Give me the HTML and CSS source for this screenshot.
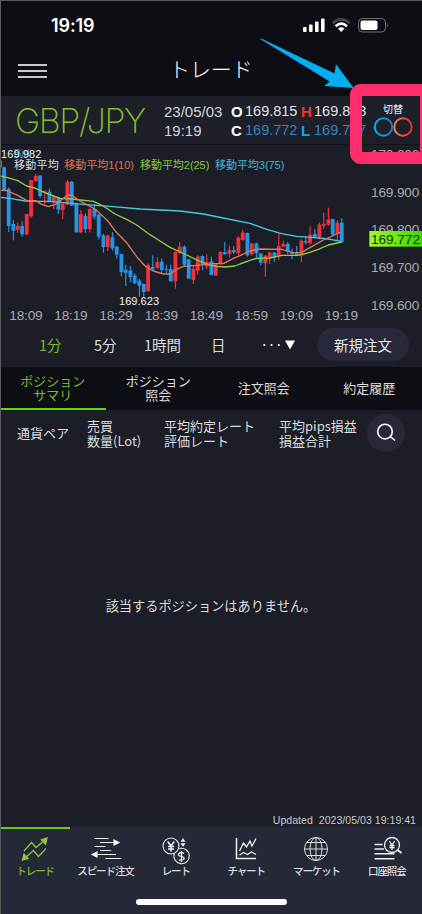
FILE: index.html
```html
<!DOCTYPE html>
<html lang="ja">
<head>
<meta charset="utf-8">
<title>トレード</title>
<link rel="stylesheet" href="styles.css">
</head>
<body>
<div class="app">
  <div class="status">
    <span class="clock">19:19</span>
    <svg class="status-icons" width="90" height="18" viewBox="0 0 90 18">
      <g fill="#fff"><rect x="1" y="11" width="3.6" height="5" rx="1"/><rect x="7" y="8.5" width="3.6" height="7.5" rx="1"/><rect x="13" y="5.5" width="3.6" height="10.5" rx="1"/><rect x="19" y="2.5" width="3.6" height="13.5" rx="1"/></g>
      <g fill="none" stroke-width="2.6"><path d="M30.5 7.2Q39.200 -.5 48 7.200" stroke="#42444c"/><path d="M33.600 10.200Q39.200 5.200 45 10.200" stroke="#fff"/></g>
      <path d="M36 12.500Q39.200 9.800 42.500 12.500L39.200 16Z" fill="#fff"/>
      <rect x="56.500" y="2.500" width="27" height="13.500" rx="4" fill="none" stroke="#6d6f77"/>
      <rect x="58.500" y="4.500" width="17" height="9.500" rx="2" fill="#fff"/>
      <path d="M85 7.300q2 1.900 0 4z" fill="#6d6f77"/>
    </svg>
  </div>
  <header class="nav">
    <div class="menu"><i></i><i></i><i></i></div>
    <h1>トレード</h1>
  </header>
  <section class="quote">
    <div class="pair">GBP/JPY</div>
    <div class="stamp"><span>23/05/03</span><span>19:19</span></div>
    <div class="ohlc">
      <b>O</b><span>169.815</span><b class="high">H</b><span>169.828</span>
      <b>C</b><span class="blue">169.772</span><b class="low">L</b><span class="blue">169.767</span>
    </div>
    <div class="switch">
      <span>切替</span>
      <svg width="40" height="20" viewBox="0 0 40 20">
        <defs>
          <linearGradient id="cb"><stop offset="0" stop-color="#00b4f5"/><stop offset="1" stop-color="#2878c8"/></linearGradient>
          <linearGradient id="cr"><stop offset="0" stop-color="#e8835a"/><stop offset="1" stop-color="#f0282e"/></linearGradient>
        </defs>
        <circle cx="10.500" cy="10" r="8.700" fill="none" stroke="url(#cb)" stroke-width="2"/>
        <circle cx="30" cy="10" r="8.700" fill="none" stroke="url(#cr)" stroke-width="2"/>
      </svg>
    </div>
  </section>
  <svg class="chart" width="422" height="178" viewBox="0 15 1266 534">
    <defs><linearGradient id="now"><stop offset="0" stop-color="#a0fa28"/><stop offset="1" stop-color="#38d800"/></linearGradient></defs>
    <text class="bid" x="42" y="50" textLength="48">Bid</text>
    <text class="mark" x="3" y="54" textLength="121">169.982</text>
    <g class="legend">
      <text x="42" y="88" fill="#d8d8da" textLength="134">移動平均</text>
      <text x="193" y="88" fill="#e0704c" textLength="209">移動平均1(10)</text>
      <text x="420" y="88" fill="#8cc63f" textLength="208">移動平均2(25)</text>
      <text x="645" y="88" fill="#42b4dc" textLength="208">移動平均3(75)</text>
    </g>
    <g id="candles"></g>
    <g class="averages">
      <path stroke="#4cc8e0" d="M0 172L30 175L75 183L160 185L250 193L330 199L420 207L540 213L610 222L670 234L750 250L800 268L845 281L890 289L935 292L985 297L1023 304"/>
      <path stroke="#8fd03c" d="M0 108L20 112L53 122L80 138L107 145L134 158L161 168L180 175L215 177L280 184L310 198L345 222L380 238L410 255L450 284L480 303L510 322L560 345L595 362L625 374L650 379L675 381L705 378L720 372L750 361L770 355L810 354L845 346L895 346L920 340L955 328L985 315L1025 306"/>
      <path stroke="#e07a58" d="M0 151L20 152L53 166L80 181L107 182L125 193L145 200L165 194L200 167L215 165L240 183L265 196L285 207L323 242L345 272L380 308L410 350L435 378L460 393L490 402L510 402L530 388L550 379L590 376L640 371L670 371L700 355L720 347L750 333L780 327L845 328L880 338L905 337L930 323L970 300L1023 276"/>
    </g>
    <text class="mark" x="357" y="494" textLength="120">169.623</text>
    <g class="axis">
      <text x="28" y="540" textLength="100">18:09</text><text x="163" y="540" textLength="100">18:19</text><text x="298" y="540" textLength="100">18:29</text><text x="434" y="540" textLength="100">18:39</text><text x="569" y="540" textLength="100">18:49</text><text x="704" y="540" textLength="100">18:59</text><text x="839" y="540" textLength="100">19:09</text><text x="974" y="540" textLength="100">19:19</text>
      <text x="1113" y="56" textLength="145">170.000</text><text x="1113" y="170" textLength="145">169.900</text><text x="1113" y="283" textLength="145">169.800</text><text x="1113" y="396" textLength="145">169.700</text><text x="1113" y="509" textLength="145">169.600</text>
    </g>
    <rect x="1108" y="273" width="158" height="47" fill="url(#now)"/>
    <text class="current" x="1113" y="312" textLength="147">169.772</text>
  </svg>
  <div class="periods">
    <span class="p1 green">1分</span><span class="p2">5分</span><span class="p3">1時間</span><span class="p4">日</span>
    <svg class="p5" width="34" height="12" viewBox="0 0 34 12" fill="#fff"><circle cx="2.300" cy="6" r="1.100"/><circle cx="9.500" cy="6" r="1.100"/><circle cx="16.800" cy="6" r="1.100"/><path d="M23 1.500h10l-5 9z"/></svg>
    <button>新規注文</button>
  </div>
  <div class="tabs">
    <div class="active">ポジション<br>サマリ</div><div>ポジション<br>照会</div><div class="single">注文照会</div><div class="single">約定履歴</div>
  </div>
  <div class="columns">
    <span>通貨ペア</span><span>売買<br>数量(Lot)</span><span>平均約定レート<br>評価レート</span><span>平均pips損益<br>損益合計</span>
    <div class="search"><svg width="20" height="20" viewBox="0 0 20 20" fill="none" stroke="#fff" stroke-width="1.600"><circle cx="9" cy="8.600" r="7.300"/><path d="M14.200 13.500L19 17.500"/></svg></div>
  </div>
  <main>
    <p class="empty">該当するポジションはありません。</p>
    <p class="updated"><span>Updated</span><span>2023/05/03 19:19:41</span></p>
  </main>
  <footer>
    <div class="item on">
      <svg width="30" height="30" viewBox="0 0 30 30" fill="none" stroke="#8cc63f" stroke-width="1.300"><path d="M4 16L11.500 7.500L16 12.500L25 5"/><path d="M27 3l-1.400 6.200-4.200-4.400z" fill="#8cc63f"/><path d="M26 13.500L18.500 21.500L13.500 15.500L5 23"/><path d="M2.500 25l1.500-6 4 4.400z" fill="#8cc63f"/></svg>
      <span>トレード</span></div>
    <div class="item">
      <svg width="30" height="30" viewBox="0 0 30 30" fill="none" stroke="#eee" stroke-width="1.200"><path d="M4.500 3.500h14M10 7.500h15M4.500 11.500h11M10 15.500h11M4 19.500h22M15.500 23.500h16"/><path d="M24 5l5 2.500-5 2.500zM7 17l-5 2.500L7 22z" fill="#fff"/></svg>
      <span>スピード注文</span></div>
    <div class="item">
      <svg width="30" height="30" viewBox="0 0 30 30" fill="none" stroke="#eee" stroke-width="1.100"><circle cx="10" cy="11" r="8"/><path d="M13.300 18.500A7.700 7.700 0 1 0 18.500 13.600"/><path stroke-width="1.600" d="M6.700 6.500L10 11l3.300-4.500M10 11v5.500M7 11.500h6M7 14h6"/><path stroke-width="1.300" d="M23 18.500q-3-2-5 0t2 3 3 2.500-5 1M20.500 16v11"/><path d="M20 6.500L22 3.500l2 3zM20 8.500L22 11.500l2-3z" fill="#fff" stroke-width=".5"/></svg>
      <span>レート</span></div>
    <div class="item">
      <svg width="30" height="30" viewBox="0 0 30 30" fill="none" stroke="#eee" stroke-width="1.300"><path stroke-width="1.500" d="M5.500 3v20.500H25"/><path d="M8.500 16L12.500 8l3 4 3.500-6 2 5L25 3.500M8.500 20l4-2.500 4 2 4-2.500 4.500 2.500"/></svg>
      <span>チャート</span></div>
    <div class="item">
      <svg width="30" height="30" viewBox="0 0 30 30" fill="none" stroke="#ddd" stroke-width="1"><circle cx="15" cy="14" r="11.500"/><ellipse cx="15" cy="14" rx="6" ry="11.500"/><path d="M15 2.500v23M3.500 14h23M6 7.500h18M6 20.500h18"/></svg>
      <span>マーケット</span></div>
    <div class="item">
      <svg width="30" height="30" viewBox="0 0 30 30" fill="none" stroke="#eee" stroke-width="1.300"><circle cx="20" cy="10" r="7.500"/><path stroke-width="2" d="M25.500 15L29.500 18"/><path d="M17.300 6l2.700 4 2.700-4M20 10v5M17.500 10.500h5M17.500 12.500h5"/><path stroke-width="1.600" d="M2.500 9.500h8M2.500 14h9.500M2.500 18.800h20M2.500 23.800h20"/></svg>
      <span>口座照会</span></div>
    <div class="home"></div>
  </footer>
  <svg class="arrow" width="100" height="56" viewBox="258 35 100 56"><path fill="#06aef0" d="M260.700 38.300L334.500 73.500L336 64.300L353.700 88L324.300 86L329.700 81.500L261 39.500Q260 38.700 260.700 38.300Z"/></svg>
  <div class="callout"></div>
  <div class="frame"></div>
</div>
<script src="chart.js"></script>
</body>
</html>
```
FILE: styles.css
```css
* { box-sizing: border-box; }
body { margin: 0; background: #1e202a; }
.app {
  position: relative; width: 422px; height: 914px; overflow: hidden;
  display: flex; flex-direction: column;
  background: #1c1e27; color: #dcdcde;
  font-family: "Liberation Sans", "Noto Sans CJK JP", sans-serif;
  font-weight: 400;
}
.status { height: 49px; background: #0d0e13; display: flex; justify-content: space-between; padding: 16px 31px 0 51px; flex: none; }
.clock { font: 600 18px/20px Inter, sans-serif; color: #fff; letter-spacing: -.1px; }
.status-icons { margin-right: -1px; }
.nav { height: 47px; background: #0d0e13; flex: none; display: flex; }
.menu { width: 29px; margin: 15px 0 0 18px; display: flex; flex-direction: column; gap: 4px; }
.menu i { height: 2px; background: #c9c9cb; }
.nav h1 { margin: 5px 0 0 122px; font-size: 21px; line-height: 32px; font-weight: 300; letter-spacing: -.1px; color: #fff; }
.quote { height: 49px; flex: none; display: flex; background: #1d1f29; border-bottom: 1px solid #11131a; }
.pair { width: 148px; padding-left: 15px; margin-right: 16px; font: 200 34px/49px Inter, sans-serif; color: #83c02f; letter-spacing: -1.4px; white-space: nowrap; }
.stamp { width: 67px; padding-top: 6px; display: flex; flex-direction: column; font-size: 15px; line-height: 19px; color: #d4d4d6; }
.ohlc { width: 138px; flex: none; display: grid; grid-template-columns: 14px 56px 13px 55px; grid-auto-rows: 19px; padding-top: 6px; font-size: 14.500px; line-height: 19px; color: #e3e3e5; }
.ohlc b { color: #fff; font-size: 15px; font-weight: 700; }
.ohlc .high { color: #f0343c; }
.ohlc .low { color: #16a8ec; }
.ohlc .blue { color: #2e86c6; }
.switch { width: 40px; flex: none; margin-left: 4px; display: flex; flex-direction: column; align-items: center; padding-top: 8px; }
.switch span { font-size: 10px; line-height: 12px; font-weight: 500; }
.switch svg { flex: none; margin-top: 1px; }
.chart { display: block; flex: none; }
.chart .bid { font-size: 34px; fill: #2388c8; }
.chart .mark { font-size: 33px; fill: #f2f2f2; }
.legend { font-size: 33px; }
.axis { font-size: 41px; fill: #a9aaae; }
.current { font-size: 41px; fill: #15300a; }
.averages { fill: none; stroke-width: 4; stroke-linejoin: round; }
.periods { height: 44px; flex: none; display: flex; align-items: center; padding-bottom: 1px; font: 400 14.500px/22px "Noto Sans CJK JP", sans-serif; }
.p1 { width: 55px; margin-left: 39px; }
.p2 { width: 50px; }
.p3 { width: 67px; }
.p4 { width: 51px; }
.p5 { margin-right: 21px; }
.green { color: #79b928; }
.periods button { width: 92px; height: 33px; border: 0; border-radius: 17px; padding: 0; background: #272938; color: #e6e6e8; font: inherit; }
.tabs { height: 43px; flex: none; display: grid; grid-template-columns: repeat(4, 1fr); background: #0d0e13; font-size: 13px; line-height: 13.500px; text-align: center; }
.tabs div { padding-top: 8px; }
.tabs .single { padding-top: 15px; }
.tabs .active { color: #79b928; border-bottom: 2px solid #5fd50b; }
.columns { height: 48px; flex: none; display: grid; grid-template-columns: 70px 77px 115px 88px 38px; padding: 0 0 2px 17px; align-items: center; font: 400 13px/15.500px "Noto Sans CJK JP", sans-serif; white-space: nowrap; }
.search { width: 38px; height: 38px; border-radius: 50%; background: #272938; display: flex; align-items: center; justify-content: center; }
main { flex: 1; display: flex; flex-direction: column; }
.empty { margin: 139px 0 0; text-align: center; font-size: 13.200px; line-height: 20px; }
.updated { margin: auto 6px 0 0; display: flex; justify-content: flex-end; gap: 6px; font-size: 10.600px; line-height: 14px; color: #c8c8cb; }
footer { height: 87px; flex: none; background: #252837; display: grid; grid-template-columns: repeat(6, 1fr); grid-template-rows: 70px 17px; position: relative; }
.item { display: flex; flex-direction: column; align-items: center; padding-top: 7px; font-size: 10.500px; font-weight: 500; line-height: 14px; letter-spacing: -1.100px; white-space: nowrap; border-top: 1px solid #252837; }
.item span { margin-top: -1px; }
.item svg { overflow: visible; }
.on { color: #79b928; border-top: 2px solid #6cc820; padding-top: 6px; }
.home { grid-column: 1 / -1; justify-self: center; width: 151px; height: 6px; margin-top: 2px; border-radius: 3px; background: #fff; }
.arrow { position: absolute; left: 258px; top: 35px; }
.callout { position: absolute; left: 350px; top: 84px; width: 82px; height: 80px; border: 12px solid #ff2d6b; border-radius: 11px; }
.frame { position: absolute; inset: 0; border: solid #5b5c60; border-width: 1px 0 0 1px; }
```
FILE: chart.js
```js
// x, direction (u: up, d: down), high, body top, body bottom, low
const candles = `0 d 62 62 82 82
12 d 80 82 150 150
26 d 142 147 258 276
40 d 240 252 272 301
53 u 248 258 270 279
66 d 244 258 283 290
80 u 222 222 283 286
93 u 120 120 229 234
107 u 102 108 123 126
120 d 105 107 168 174
134 u 150 154 157 196
148 d 146 155 185 185
161 u 170 171 187 207
175 d 170 172 209 222
188 u 190 191 210 237
202 u 121 125 194 196
215 d 123 125 197 197
229 d 190 190 277 277
242 u 210 222 277 279
256 d 220 228 267 279
269 u 205 207 267 278
283 d 192 207 230 238
296 d 222 224 290 298
310 d 281 286 321 338
323 u 284 287 321 333
337 d 276 292 325 331
350 d 318 320 344 356
364 d 342 342 396 409
377 d 374 389 399 438
391 d 378 391 411 427
404 d 400 407 429 432
418 d 416 422 437 470
431 d 430 432 456 470
444 u 370 375 453 455
458 d 346 381 388 390
472 u 352 366 384 386
485 d 356 365 390 402
499 d 375 386 389 402
512 d 374 387 424 424
526 u 334 336 424 446
539 u 306 320 338 342
553 d 316 320 374 381
566 d 358 358 416 416
580 u 376 386 420 432
593 u 346 350 392 404
607 d 346 348 372 391
620 u 343 366 380 388
634 d 350 364 405 405
647 u 373 373 407 407
661 u 334 336 372 374
674 d 306 336 343 344
688 u 317 330 342 352
701 d 318 330 337 342
715 u 289 293 340 346
728 u 270 278 300 302
742 d 278 279 346 350
755 u 310 310 343 346
769 d 308 310 340 358
782 d 340 340 368 376
796 u 345 347 370 411
809 u 335 338 352 372
823 d 336 338 352 366
836 u 280 318 346 360
850 u 302 312 320 322
863 d 306 312 334 342
876 d 326 336 342 357
890 d 318 340 346 348
904 u 298 302 346 366
917 d 290 303 308 314
930 u 258 284 309 315
944 d 268 282 291 294
958 u 248 254 292 298
971 u 218 252 258 266
985 u 203 238 254 258
998 d 237 237 284 290
1012 u 241 248 281 300
1025 d 234 248 307 308`;
document.getElementById("candles").innerHTML = candles.split("\n").map(row => {
  const [x, dir, high, top, bottom, low] = row.split(" ");
  const color = dir === "u" ? "#f0303a" : "#2494e8";
  return `<g fill="${color}"><rect x="${x - 1.5}" y="${high}" width="3.5" height="${low - high}"/><rect x="${x - 5.5}" y="${top}" width="11.5" height="${bottom - top}"/></g>`;
}).join("");
```
